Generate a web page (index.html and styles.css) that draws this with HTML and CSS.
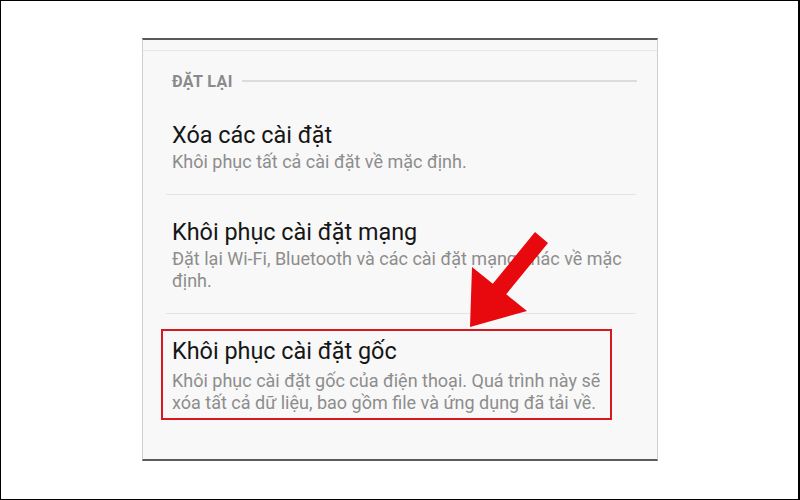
FILE: index.html
```html
<!DOCTYPE html>
<html lang="vi">
<head>
    <meta charset="UTF-8">
    <meta name="viewport" content="width=device-width, initial-scale=1.0">
    <title>Đặt lại</title>
    <link rel="stylesheet" href="styles.css">
</head>
<body>
    <div class="frame">
        <div class="panel">
            <div class="prev-end"></div>
            <div class="section-head">
                <span class="section-title">ĐẶT LẠI</span>
                <span class="section-line"></span>
            </div>
            <ul class="options">
                <li class="option">
                    <div class="option-title">Xóa các cài đặt</div>
                    <div class="option-desc">Khôi phục tất cả cài đặt về mặc định.</div>
                </li>
                <li class="option">
                    <div class="option-title">Khôi phục cài đặt mạng</div>
                    <div class="option-desc">Đặt lại Wi-Fi, Bluetooth và các cài đặt mạng khác về mặc định.</div>
                </li>
                <li class="option highlight">
                    <div class="option-title">Khôi phục cài đặt gốc</div>
                    <div class="option-desc">Khôi phục cài đặt gốc của điện thoại. Quá trình này sẽ xóa tất cả dữ liệu, bao gồm file và ứng dụng đã tải về.</div>
                </li>
            </ul>
        </div>
        <!-- annotation arrow -->
        <svg class="arrow" width="800" height="500" viewBox="0 0 800 500">
            <polygon points="470,327 472,267 492.8,283.7 535,232 548,243 506.2,294.3 527,311" fill="#e8090f"/>
        </svg>
    </div>
</body>
</html>
```

FILE: styles.css
```css
* {
    box-sizing: border-box;
}

body {
    margin: 0;
    background-color: #fff;
    font-family: Roboto, "Noto Sans", sans-serif;
}

.frame {
    position: relative;
    width: 800px;
    height: 500px;
    border: 1px solid #000;
    border-right-width: 2px;
    background-color: #fff;
    overflow: hidden;
}

.panel {
    width: 516px;
    height: 423px;
    margin: 37px 0 0 141px;
    background-color: #f8f8f8;
    border-top: 2px solid #5a5a5a;
    border-bottom: 2px solid #5a5a5a;
    border-left: 1px solid #cfcfcf;
    border-right: 1px solid #cfcfcf;
}

.prev-end {
    height: 11px;
    border-bottom: 1px solid #e6e6e6;
}

.section-head {
    display: flex;
    align-items: center;
    height: 20px;
    margin-top: 20px;
    padding: 0 20px 0 29px;
}

.section-title {
    font-size: 16px;
    font-weight: bold;
    letter-spacing: 0.4px;
    color: #8a8a8a;
}

.section-line {
    flex: 1;
    height: 2px;
    margin-left: 9px;
    background-color: #dcdcdc;
}

.options {
    list-style: none;
    margin: 0 21px 0 23px;
    padding: 30px 0 0 0;
}

.option {
    padding: 0 0 21px 6px;
    border-bottom: 1px solid #e3e3e3;
}

.option + .option {
    padding-top: 23px;
}

.option-title {
    font-size: 23.4px;
    line-height: 28px;
    color: #161616;
}

.option-desc {
    margin-top: 2px;
    font-size: 18px;
    line-height: 22px;
    color: #8d8d8d;
}

.option.highlight {
    margin: 15px 24px 0 -5px;
    padding: 6px 0 4px 9px;
    border: 2px solid #d7191f;
}

.option.highlight .option-desc {
    margin-top: 5px;
}

.arrow {
    position: absolute;
    top: -1px;
    left: -1px;
    pointer-events: none;
}
```
